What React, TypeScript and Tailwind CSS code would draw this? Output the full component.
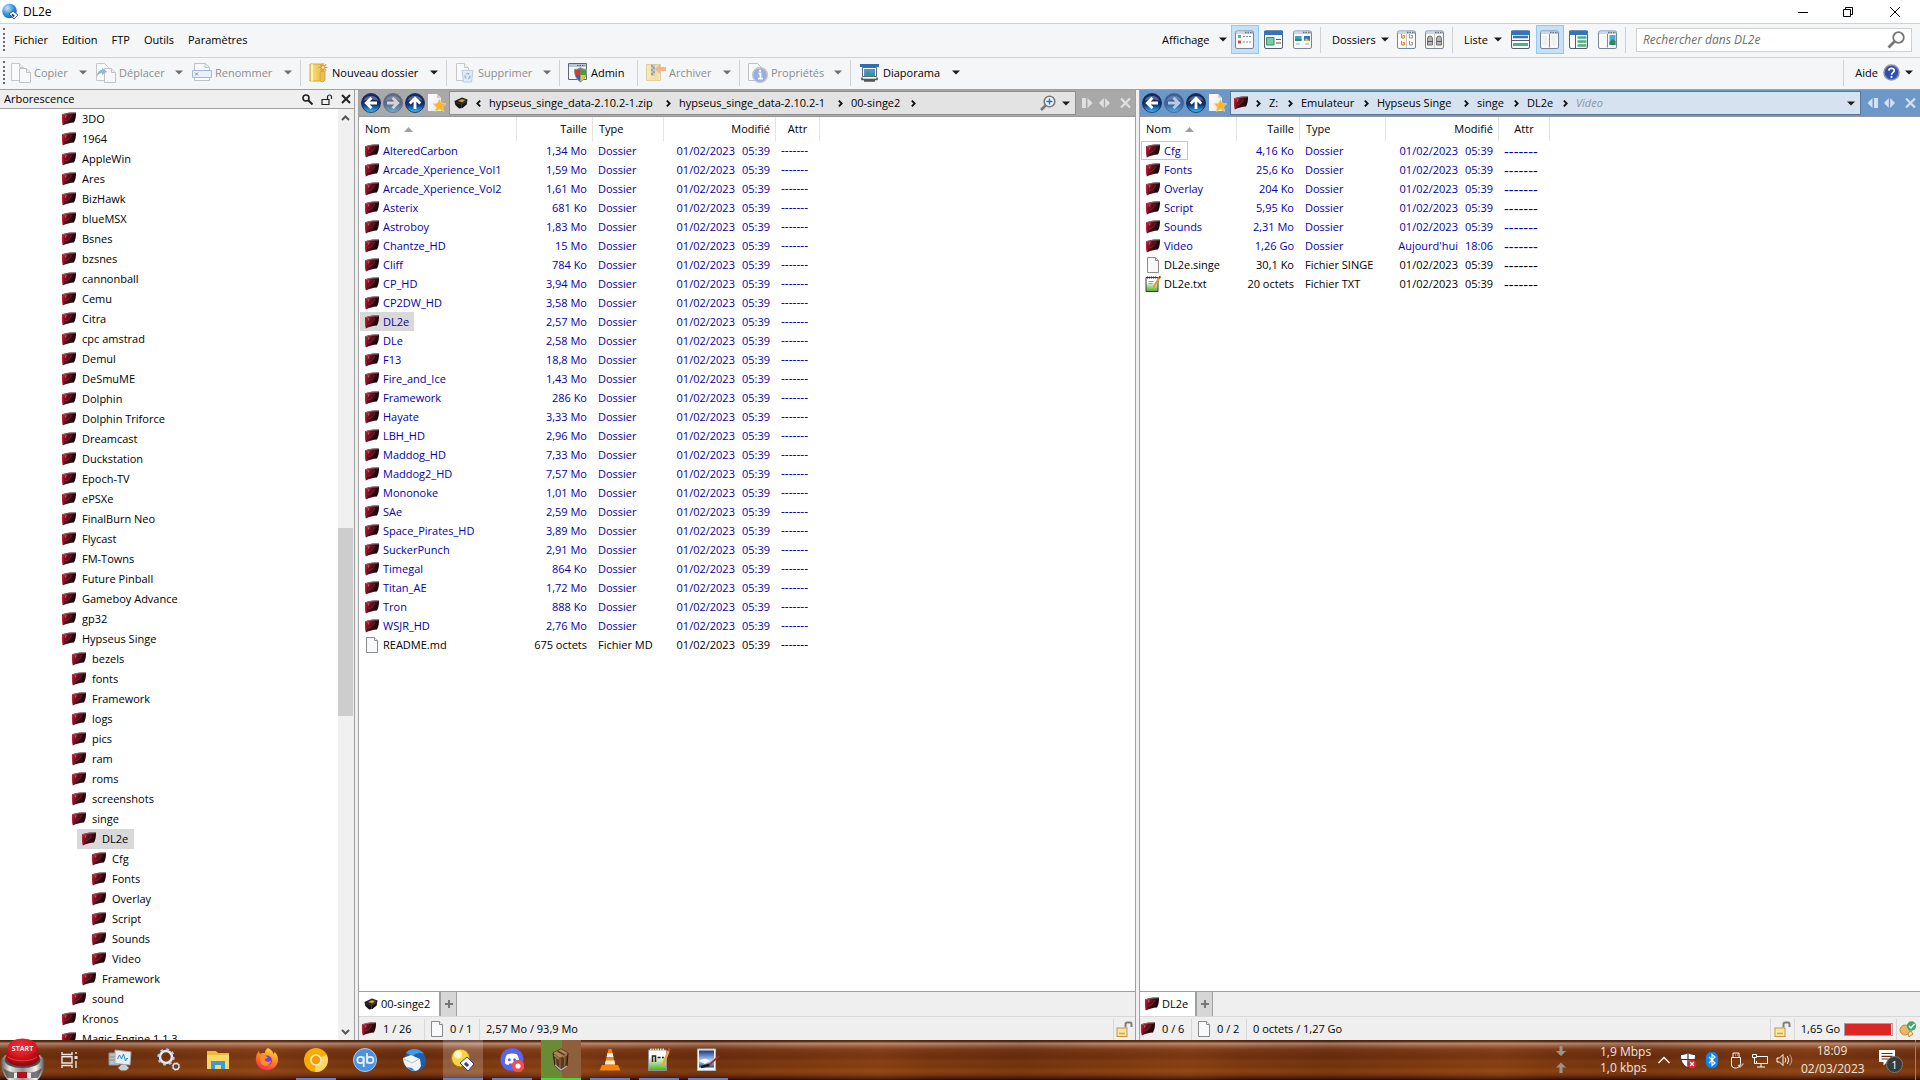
import React from "react";

type P = { c?: string };

/* ---------- small pieces ---------- */

const Caret = ({ c = "#1b1b1b" }: P) => (
  <svg width="8" height="5" viewBox="0 0 8 5" className="shrink-0" aria-hidden="true">
    <path d="M0 0.5h8L4 4.5z" fill={c} />
  </svg>
);

const Sep = () => <div className="h-[26px] w-px shrink-0 bg-[#cfd1d3]" />;

const Grip = () => <div className="h-[23px] w-0 shrink-0 border-l-2 border-dotted border-[#6b6b6b]" />;

const Defs = () => (
  <svg width="0" height="0" className="absolute" aria-hidden="true">
    <defs>
      <linearGradient id="gem" x1="0" y1="0.2" x2="1" y2="0.7">
        <stop offset="0" stopColor="#c02038" />
        <stop offset="0.22" stopColor="#8c1628" />
        <stop offset="0.5" stopColor="#4c0c16" />
        <stop offset="0.78" stopColor="#1e0508" />
        <stop offset="1" stopColor="#1a1214" />
      </linearGradient>
      <linearGradient id="orb" x1="0" y1="0" x2="0" y2="1">
        <stop offset="0" stopColor="#1a2f66" />
        <stop offset="0.35" stopColor="#13265a" />
        <stop offset="0.6" stopColor="#0f3577" />
        <stop offset="0.85" stopColor="#1f8fd8" />
        <stop offset="1" stopColor="#45c8f8" />
      </linearGradient>
      <linearGradient id="paper" x1="0" y1="0" x2="1" y2="1">
        <stop offset="0" stopColor="#ffffff" />
        <stop offset="1" stopColor="#e6e6e6" />
      </linearGradient>
      <linearGradient id="gold" x1="0" y1="0" x2="1" y2="0">
        <stop offset="0" stopColor="#f7e08a" />
        <stop offset="0.75" stopColor="#efc84e" />
        <stop offset="1" stopColor="#f6e3a0" />
      </linearGradient>
      <radialGradient id="redbtn" cx="0.45" cy="0.3" r="0.8">
        <stop offset="0" stopColor="#f2444a" />
        <stop offset="0.5" stopColor="#cf1018" />
        <stop offset="1" stopColor="#7a0409" />
      </radialGradient>
      <linearGradient id="chrome-ring" x1="0" y1="0" x2="1" y2="0">
        <stop offset="0" stopColor="#5b5b5b" />
        <stop offset="0.2" stopColor="#e3e3e3" />
        <stop offset="0.5" stopColor="#8d8d8d" />
        <stop offset="0.8" stopColor="#f2f2f2" />
        <stop offset="1" stopColor="#4c4c4c" />
      </linearGradient>
      <linearGradient id="fire" x1="0.8" y1="0" x2="0.3" y2="1">
        <stop offset="0" stopColor="#ffe14a" />
        <stop offset="0.45" stopColor="#ff8a1e" />
        <stop offset="1" stopColor="#f2275c" />
      </linearGradient>
      <linearGradient id="green" x1="0" y1="0" x2="0" y2="1">
        <stop offset="0.3" stopColor="#ffffff" />
        <stop offset="1" stopColor="#4cae1e" />
      </linearGradient>
      <linearGradient id="sky" x1="0" y1="0" x2="0" y2="1">
        <stop offset="0" stopColor="#12398c" />
        <stop offset="0.6" stopColor="#b9d6f2" />
        <stop offset="1" stopColor="#1d4f9c" />
      </linearGradient>
      <radialGradient id="ball" cx="0.35" cy="0.3" r="0.8">
        <stop offset="0" stopColor="#c6e6ff" />
        <stop offset="0.5" stopColor="#3f97e6" />
        <stop offset="1" stopColor="#1455a8" />
      </radialGradient>
    </defs>
  </svg>
);

const Gem = () => (
  <svg width="16" height="16" viewBox="0 0 16 16" className="shrink-0" aria-hidden="true">
    <path d="M1 3.2C5 1.6 10 1.2 15 1.6c.1 4-.4 7-2 10-4 .2-7.500 1.200-11.200 3C1 11 .8 7 1 3.200z" fill="url(#gem)" />
    <path d="M2 3.700C5 2.400 10 1.900 14.500 2" stroke="#8d8084" strokeWidth="0.9" fill="none" opacity="0.8" />
    <path d="M1.600 5c-.1 3 .1 5 .6 7.500" stroke="#c82038" strokeWidth="1" fill="none" opacity="0.8" />
    <path d="M4 10c3-.5 5.500-2.500 6.500-6" stroke="#7a2c38" strokeWidth="0.8" fill="none" />
    <path d="M3.500 4.800l2-.8-.8 3z" fill="#e08a96" opacity="0.6" />
  </svg>
);

const FileIcon = () => (
  <svg width="16" height="16" viewBox="0 0 16 16" className="shrink-0" aria-hidden="true">
    <path d="M2.500.5h8l3 3v12h-11z" fill="#f7f9fa" stroke="#8b8b8b" />
    <path d="M10.500.5v3h3" fill="#fff" stroke="#8b8b8b" />
  </svg>
);

const NoteIcon = () => (
  <svg width="16" height="16" viewBox="0 0 16 16" className="shrink-0" aria-hidden="true">
    <path d="M1 1.500h12v14H1z" fill="url(#green)" stroke="#3a3a3a" />
    <path d="M2 1.500h10" stroke="#333" strokeWidth="2" strokeDasharray="1 1" />
    <path d="M3.500 5.500h5M3.500 7.500h4" stroke="#9a9a9a" />
    <path d="M14.500 1.500L8.500 11" stroke="#e39a26" strokeWidth="2" />
    <path d="M15.300.3l-1.200 2" stroke="#c02020" strokeWidth="2" />
  </svg>
);

const Crate = () => (
  <svg width="16" height="16" viewBox="0 0 16 16" className="shrink-0" aria-hidden="true">
    <path d="M1.500 6L9 2.500l5.500 2-.8 5L9.500 13 6 13.500 2.300 10z" fill="#161616" />
    <path d="M4 6l5-2.500 4.500 1.500-4 2.700z" fill="#6a5420" />
    <path d="M5.500 6l3.500-1.500 2.500 1-2.500 1.500z" fill="#d9ad38" />
    <path d="M8.500 8.500V13M2.500 7.300l6 1.900 5-2.700" stroke="#3d3d3d" fill="none" />
  </svg>
);

const Orb = ({ dir, faded }: { dir: "left" | "right" | "up"; faded?: boolean }) => (
  <svg width="20" height="20" viewBox="0 0 20 20" opacity={faded ? 0.5 : 1} className="shrink-0" aria-hidden="true">
    <circle cx="10" cy="10" r="9.500" fill="url(#orb)" stroke="#10244f" strokeWidth="0.8" />
    <path d="M2.500 8a7.800 7 0 0 1 15 0c-4-2-11-2-15 0z" fill="#9fb4d6" opacity="0.45" />
    <g transform={dir === "left" ? undefined : dir === "right" ? "rotate(180 10 10)" : "rotate(90 10 10)"}>
      <path d="M16 10H6M10.500 4.700L5.200 10l5.300 5.300" stroke="#fff" strokeWidth="2.800" fill="none" />
    </g>
  </svg>
);

const StarPage = () => (
  <svg width="20" height="20" viewBox="0 0 20 20" className="shrink-0" aria-hidden="true">
    <path d="M1 1h9l4 4v13H1z" fill="url(#paper)" />
    <path d="M10 1v4h4z" fill="#cfcfcf" />
    <path d="M12.500 6l2 4.200 4.500.5-3.300 3.100.9 4.700-4.100-2.300L8.300 18.500l.9-4.600L6 10.700l4.500-.5z" fill="#f8b62d" stroke="#fbdc8a" strokeWidth="0.6" />
  </svg>
);

/* ---------- toolbar icons ---------- */

const Svg20 = ({ children, faded }: { children: React.ReactNode; faded?: boolean }) => (
  <svg width="20" height="20" viewBox="0 0 20 20" opacity={faded ? 0.5 : 1} className="shrink-0" aria-hidden="true">
    {children}
  </svg>
);

const Page = ({ x = 0, y = 0 }: { x?: number; y?: number }) => (
  <g transform={`translate(${x} ${y})`}>
    <path d="M.5.5h7l4 4v10H.5z" fill="#fbfbfb" stroke="#8e8e8e" />
    <path d="M7.500.5v4h4" fill="#e6e6e6" stroke="#8e8e8e" />
  </g>
);

const CopyIcon = () => (
  <Svg20 faded>
    <path d="M.5.5h8l4 4v13H.5z" fill="#fff" stroke="#9a9a9a" />
    <path d="M8.500.5v4h4" fill="#e6e6e6" stroke="#9a9a9a" />
    <Page x={8} y={5} />
  </Svg20>
);
const MoveIcon = () => (
  <Svg20 faded>
    <path d="M.5.5h8l4 4v13H.5z" fill="#fff" stroke="#9a9a9a" />
    <Page x={8} y={5} />
    <path d="M1 14c0-5 2-7 5-7V5l5 3.500L6 12v-2c-2 0-3.500 1-5 4z" fill="#3277c8" />
  </Svg20>
);
const RenameIcon = () => (
  <Svg20 faded>
    <path d="M2.500.5h11l4 4v13h-15z" fill="#fff" stroke="#8e8e8e" />
    <path d="M13 .5v4h4" fill="#eee" stroke="#8e8e8e" />
    <path d="M.5 7.500h19v7H.5z" fill="#e2edfb" stroke="#4e79c2" />
    <path d="M3 9.500l3 3M6 9.500l-3 3" stroke="#222" />
  </Svg20>
);
const NewFolderIcon = () => (
  <Svg20>
    <path d="M1 1h12v17H1z" fill="url(#gold)" stroke="#d4a93c" />
    <path d="M3 1v17" stroke="#fff6cf" strokeWidth="1.500" />
    <path d="M11 18V9l2-1h3v9l-2 2z" fill="#e8c053" stroke="#cfa03a" strokeWidth="0.8" />
    <path d="M14 0v9M9.500 4.500h9M10.800 1.300l6.400 6.400M17.200 1.300l-6.400 6.400" stroke="#e8912c" strokeWidth="1.200" />
    <circle cx="14" cy="4.500" r="2" fill="#ffe9a6" stroke="#e8912c" />
  </Svg20>
);
const TrashIcon = () => (
  <Svg20 faded>
    <path d="M1.500.5h8l4 4v13h-12z" fill="#fff" stroke="#9a9a9a" />
    <path d="M9.500.5v4h4" fill="#eee" stroke="#9a9a9a" />
    <path d="M7 7.500h11l-1.500 11.500h-8z" fill="#cfe1f5" stroke="#8aa4c4" />
    <circle cx="12.500" cy="13" r="2.500" fill="none" stroke="#3d7fd0" strokeWidth="1.500" strokeDasharray="3.500 1.500" />
  </Svg20>
);
const AdminIcon = () => (
  <Svg20>
    <path d="M.5.5h18v16H.5z" fill="#f4f6f8" stroke="#5c6875" />
    <path d="M1 1h17v3H1z" fill="#b9c6d4" />
    <path d="M9 2.500h8" stroke="#4d5a68" strokeDasharray="1.500 1" />
    <path d="M6 6c3 0 5-.8 6.500-2C14 5.200 16 6 19 6c.2 6-1.500 10-6.500 13.500C7.500 16 5.800 12 6 6z" fill="#8f979f" />
    <path d="M12.500 5.500V12H7.500C7 10 7 8.500 7 7c2.500 0 4-.6 5.500-1.500z" fill="#d8372c" />
    <path d="M12.500 5.500V12h5c.5-2 .5-3.500.5-5-2.500 0-4-.6-5.500-1.500z" fill="#3f9f3c" />
    <path d="M12.500 12v6.300C9.500 16.500 8.200 14.500 7.500 12z" fill="#2c63c8" />
    <path d="M12.500 12v6.300c3-1.800 4.300-3.800 5-6.300z" fill="#f4c32a" />
  </Svg20>
);
const ArchiveIcon = () => (
  <Svg20 faded>
    <path d="M.5 1.500h14v16H.5z" fill="url(#gold)" stroke="#cda845" />
    <path d="M5 1h4v12H5z" fill="#9a9a9a" />
    <path d="M5 3h2M7 5h2M5 7h2M7 9h2M5 11h2" stroke="#333" strokeWidth="1.500" />
    <path d="M9 6l5-5v3h6v4h-6v3z" fill="#ee7538" />
  </Svg20>
);
const PropsIcon = () => (
  <Svg20 faded>
    <path d="M.5.5h9l4 4v13H.5z" fill="#fff" stroke="#8e8e8e" />
    <circle cx="12" cy="12" r="7.300" fill="#3f66cc" stroke="#8c95a6" strokeWidth="1.400" />
    <path d="M10.500 10.500h2v5M10 15.700h5" stroke="#fff" strokeWidth="1.800" fill="none" />
    <circle cx="12" cy="7.700" r="1.300" fill="#fff" />
  </Svg20>
);
const SlideIcon = () => (
  <Svg20>
    <path d="M0 1h19v3H0z" fill="#2f6db0" />
    <path d="M2.500 4.500h14v9h-14z" fill="#eef4fa" stroke="#5f6b76" />
    <path d="M4 6h11v7H4z" fill="#4f93d6" />
    <path d="M4 13l4-5 3 3 2-2 2 2v2z" fill="#2e9e80" />
    <path d="M2 14.500v2h15v-2M4 18h11" stroke="#555" strokeWidth="1.600" fill="none" />
  </Svg20>
);

type WinKind = "details" | "card" | "thumbs" | "fold" | "lock" | "rows" | "dual" | "tree" | "preview";
const WinIcon = ({ kind }: { kind: WinKind }) => {
  const flat = kind === "card" || kind === "rows" || kind === "tree";
  return (
    <svg width="20" height="20" viewBox="0 0 20 20" className="shrink-0" aria-hidden="true">
      <rect x="0.500" y="1" width="18" height="17.500" rx="1.500" fill="#fafafa" stroke={flat ? "#555d66" : "#76849a"} />
      {flat ? <path d="M0 1.500Q0 .5 1 .5h17q1 0 1 1V5H0z" fill="#3474b8" /> : (
        <>
          <path d="M1 1.500h17V4H1z" fill="#cdd8e4" />
          <path d="M10 2.500h8" stroke="#5f6d7c" strokeWidth="1.500" strokeDasharray="1.500 1" />
        </>
      )}
      {kind === "details" && (
        <>
          <path d="M3 5h3v3H3z" fill="#58b883" />
          <path d="M3 10.500h3v3H3z" fill="#e04c4c" />
          <path d="M8 6.500h9M8 12h9" stroke="#8e8e8e" strokeWidth="1.200" strokeDasharray="2 1" />
        </>
      )}
      {kind === "card" && (
        <>
          <path d="M2.500 7.500h7.500v7.500H2.500z" fill="#7cc9a8" stroke="#3b8e6c" />
          <path d="M12 9.500h5M12 13h5" stroke="#555" />
        </>
      )}
      {kind === "thumbs" && (
        <>
          <path d="M2 6h6.500v5H2z" fill="#3da0c8" />
          <path d="M2 10h6.500" stroke="#2e8e55" strokeWidth="2" />
          <path d="M11 6h6v5h-6z" fill="#2c72d6" />
          <path d="M13 8l4 3h-6z" fill="#e0b92c" />
          <path d="M3 14h4M12 14h4" stroke="#aaa" />
        </>
      )}
      {kind === "fold" && (
        <>
          <path d="M4.500 4v4h3V5.500H6M4.500 11v4h3v-2.500H6" fill="#f6dd8c" stroke="#c98f22" />
          <path d="M12.500 4v4h3V5.500H14M12.500 11v4h3v-2.500H14" fill="#eee" stroke="#999" />
          <path d="M9.500 4v14" stroke="#c6c6c6" />
        </>
      )}
      {kind === "lock" && (
        <>
          <path d="M2.500 15V9a2.500 3 0 0 1 5 0v6zM11.500 15V9a2.500 3 0 0 1 5 0v6z" fill="#b5b5b5" stroke="#6e6e6e" />
          <path d="M3 11.500h4.500M12 11.500h4.500" stroke="#555" />
          <path d="M9.500 4v14" stroke="#c6c6c6" />
        </>
      )}
      {kind === "rows" && (
        <>
          <path d="M2 7h15" stroke="#3474b8" strokeWidth="2.500" />
          <path d="M0 10.500h19" stroke="#555d66" />
          <path d="M2 14.500h15" stroke="#4fae86" strokeWidth="3" />
        </>
      )}
      {kind === "dual" && (
        <>
          <path d="M9.500 4v13.500" stroke="#7d8b9c" />
          <path d="M2.500 5.500h5v10h-5zM11.500 5.500h5v10h-5z" fill="#f0f0f0" />
        </>
      )}
      {kind === "tree" && (
        <>
          <path d="M6.500 5v13" stroke="#555d66" />
          <path d="M8.500 7.500h9M8.500 11.500h9M8.500 15.500h9" stroke="#4fae86" strokeWidth="2.500" />
        </>
      )}
      {kind === "preview" && (
        <>
          <path d="M9.500 4v13.500" stroke="#7d8b9c" />
          <path d="M11.500 5h6v10h-6z" fill="#4fa8e0" />
          <path d="M11.500 15v-3l3-3 3 2v4z" fill="#2c8a62" />
        </>
      )}
    </svg>
  );
};

/* ---------- tool bars ---------- */

const ViewBtn = ({ kind, on, label }: { kind: WinKind; on?: boolean; label: string }) => (
  <button
    aria-label={label}
    className={
      on
        ? "flex h-[29px] w-7 items-center justify-center border border-[#90c8f6] bg-[#c4e1f9]"
        : "flex h-[29px] w-7 items-center justify-center border border-transparent"
    }
  >
    <WinIcon kind={kind} />
  </button>
);

const Tool = ({ icon, label, w, off, caret = true }: { icon: React.ReactNode; label: string; w: string; off?: boolean; caret?: boolean }) => (
  <button className={`flex h-7 shrink-0 items-center gap-[3px] pr-px ${w} ${off ? "text-[#8b8d8f]" : "text-black"}`}>
    {icon}
    <span className="whitespace-nowrap">{label}</span>
    {caret && (
      <span className="ml-auto">
        <Caret c={off ? "#6d6d6d" : "#1b1b1b"} />
      </span>
    )}
  </button>
);

const TitleBar = () => (
  <header className="flex h-[23px] shrink-0 items-center bg-white pl-[2px] text-xs">
    <svg width="17" height="17" viewBox="0 0 17 17" aria-hidden="true">
      <circle cx="7.500" cy="8" r="7.300" fill="url(#ball)" />
      <path d="M7 11l4-3 5 4-4 4z" fill="#eef3fb" stroke="#465a8c" />
      <path d="M10 11.500l2 2" stroke="#2c3f78" strokeWidth="2" />
    </svg>
    <h1 className="ml-1">DL2e</h1>
    <div className="ml-auto flex items-center">
      <button aria-label="Réduire" className="flex h-5 w-[46px] items-center justify-center">
        <svg width="10" height="10" viewBox="0 0 10 10"><path d="M0 5.500h10" stroke="#000" /></svg>
      </button>
      <button aria-label="Restaurer" className="flex h-5 w-[44px] items-center justify-center">
        <svg width="10" height="10" viewBox="0 0 10 10" fill="none" stroke="#000">
          <path d="M.5 2.500h7v7h-7zM2.500 2.500v-2h7v7h-2" />
        </svg>
      </button>
      <button aria-label="Fermer" className="flex h-5 w-[50px] items-center justify-center">
        <svg width="10" height="10" viewBox="0 0 10 10" stroke="#000"><path d="M0 0l10 10M10 0L0 10" /></svg>
      </button>
    </div>
  </header>
);

const MenuBar = () => (
  <div className="flex h-[35px] shrink-0 items-center border-y border-[#cfd1d3] bg-[#f4f6f8] pb-[2px]">
    <div className="flex items-center pl-[3px]">
      <Grip />
      <nav className="ml-[9px] flex gap-[14px]">
        {["Fichier", "Edition", "FTP", "Outils", "Paramètres"].map((m) => (
          <button key={m}>{m}</button>
        ))}
      </nav>
    </div>
    <div className="ml-auto flex items-center pr-[8px]">
      <button className="flex w-[69px] items-center justify-between pr-1">Affichage <Caret /></button>
      <ViewBtn kind="details" on label="Détails" />
      <span className="w-px" />
      <ViewBtn kind="card" label="Tuiles" />
      <span className="w-px" />
      <ViewBtn kind="thumbs" label="Vignettes" />
      <span className="w-[3px]" />
      <Sep />
      <button className="ml-[11px] flex w-[61px] items-center justify-between pr-1">Dossiers <Caret /></button>
      <ViewBtn kind="fold" label="Format des dossiers" />
      <ViewBtn kind="lock" label="Verrouiller le format" />
      <span className="w-[3px]" />
      <Sep />
      <button className="ml-[11px] flex w-[43px] items-center justify-between pr-[5px]">Liste <Caret /></button>
      <ViewBtn kind="rows" label="Vue horizontale" />
      <span className="w-px" />
      <ViewBtn kind="dual" on label="Vue double" />
      <span className="w-px" />
      <ViewBtn kind="tree" label="Arborescence" />
      <span className="w-px" />
      <ViewBtn kind="preview" label="Aperçu" />
      <span className="w-[3px]" />
      <Sep />
      <label className="ml-[10px] flex h-6 w-[276px] items-center border border-[#cfd1d3] bg-white px-[6px]">
        <input
          aria-label="Rechercher dans DL2e"
          placeholder="Rechercher dans DL2e"
          className="min-w-0 flex-1 bg-transparent text-xs italic outline-none placeholder:text-[#6e6e6e]"
        />
        <svg width="18" height="18" viewBox="0 0 18 18" fill="none" stroke="#777" aria-hidden="true">
          <circle cx="11.500" cy="6.500" r="5.300" strokeWidth="1.800" />
          <path d="M7.500 10.500l-6 6" strokeWidth="2.800" />
        </svg>
      </label>
    </div>
  </div>
);

const ToolBar = () => (
  <div className="flex h-[31px] shrink-0 items-center bg-[#f4f6f8] pb-[2px] pl-[3px] pr-[7px]">
    <Grip />
    <span className="w-[6px]" />
    <Tool icon={<CopyIcon />} label="Copier" w="w-[77px]" off />
    <span className="w-2" />
    <Tool icon={<MoveIcon />} label="Déplacer" w="w-[88px]" off />
    <span className="w-2" />
    <Tool icon={<RenameIcon />} label="Renommer" w="w-[101px]" off />
    <span className="w-[7px]" />
    <Sep />
    <span className="w-2" />
    <Tool icon={<NewFolderIcon />} label="Nouveau dossier" w="w-[130px]" />
    <span className="w-[7px]" />
    <Sep />
    <span className="w-2" />
    <Tool icon={<TrashIcon />} label="Supprimer" w="w-[97px]" off />
    <span className="w-[7px]" />
    <Sep />
    <span className="w-2" />
    <Tool icon={<AdminIcon />} label="Admin" w="w-[62px]" caret={false} />
    <span className="w-[7px]" />
    <Sep />
    <span className="w-2" />
    <Tool icon={<ArchiveIcon />} label="Archiver" w="w-[86px]" off />
    <span className="w-[7px]" />
    <Sep />
    <span className="w-2" />
    <Tool icon={<PropsIcon />} label="Propriétés" w="w-[95px]" off />
    <span className="w-[7px]" />
    <Sep />
    <span className="w-[9px]" />
    <Tool icon={<SlideIcon />} label="Diaporama" w="w-[101px]" />
    <div className="ml-auto flex items-center">
      <Sep />
      <button className="ml-[11px] flex items-center gap-[5px]">
        Aide
        <svg width="17" height="17" viewBox="0 0 17 17" aria-hidden="true">
          <circle cx="8.500" cy="8.500" r="7.500" fill="#2c4fb4" stroke="#8b93a0" strokeWidth="1.600" />
          <path d="M5.800 6.600c.2-3 5.600-3 5.500 0-.1 1.800-2.600 1.700-2.700 4" stroke="#fff" strokeWidth="1.700" fill="none" />
          <circle cx="8.500" cy="12.900" r="1.100" fill="#fff" />
        </svg>
        <Caret />
      </button>
    </div>
  </div>
);

/* ---------- tree ---------- */

const tree: [number, string][] = [
  ...["3DO", "1964", "AppleWin", "Ares", "BizHawk", "blueMSX", "Bsnes", "bzsnes", "cannonball", "Cemu", "Citra", "cpc amstrad", "Demul", "DeSmuME", "Dolphin", "Dolphin Triforce", "Dreamcast", "Duckstation", "Epoch-TV", "ePSXe", "FinalBurn Neo", "Flycast", "FM-Towns", "Future Pinball", "Gameboy Advance", "gp32", "Hypseus Singe"].map((n) => [0, n] as [number, string]),
  ...["bezels", "fonts", "Framework", "logs", "pics", "ram", "roms", "screenshots", "singe"].map((n) => [1, n] as [number, string]),
  [2, "DL2e"],
  ...["Cfg", "Fonts", "Overlay", "Script", "Sounds", "Video"].map((n) => [3, n] as [number, string]),
  [2, "Framework"],
  [1, "sound"],
  [0, "Kronos"],
  [0, "Magic-Engine 1.1.3"],
];
const indent = ["pl-[57px]", "pl-[67px]", "pl-[77px]", "pl-[87px]"];

const Tree = () => (
  <aside className="flex w-[355px] shrink-0 flex-col border-r border-[#a0a0a0] bg-white">
    <div className="flex h-[19px] shrink-0 items-center border-b border-[#a0a0a0] bg-[#efefef] pl-1 pr-[3px]">
      <h2>Arborescence</h2>
      <div className="ml-auto flex items-center gap-2">
        <button aria-label="Rechercher">
          <svg width="11" height="11" viewBox="0 0 11 11" fill="none" stroke="#222">
            <circle cx="4" cy="4" r="3" strokeWidth="1.600" />
            <path d="M6 6l4.500 4.500" strokeWidth="2" />
          </svg>
        </button>
        <button aria-label="Déverrouiller">
          <svg width="12" height="11" viewBox="0 0 12 11" fill="none" stroke="#222">
            <path d="M1 5.500h7v5H1z" strokeWidth="1.200" />
            <path d="M6.500 5V3a2 2 0 0 1 4 0v2" strokeWidth="1.200" />
          </svg>
        </button>
        <button aria-label="Fermer">
          <svg width="10" height="10" viewBox="0 0 10 10" stroke="#222" strokeWidth="2"><path d="M1 1l8 8M9 1L1 9" /></svg>
        </button>
      </div>
    </div>
    <div className="flex min-h-0 flex-1">
      <ul className="min-w-0 flex-1 overflow-hidden">
        {tree.map(([d, n], i) => (
          <li key={i} className={`flex h-5 ${indent[d]}`}>
            <button
              className={
                i === 36
                  ? "flex h-5 items-center gap-[5px] bg-[#d9d9d9] pl-1 pr-[6px]"
                  : "flex h-5 items-center gap-[5px] pl-1 pr-[6px]"
              }
            >
              <Gem />
              {n}
            </button>
          </li>
        ))}
      </ul>
      <div className="flex w-4 shrink-0 flex-col bg-[#f0f0f0]">
        <svg width="15" height="17" viewBox="0 0 15 17" fill="none" stroke="#555" strokeWidth="2"><path d="M4 11l3.500-3.500L11 11" /></svg>
        <div className="flex flex-1 flex-col">
          <div className="grow-[402]" />
          <div className="mr-px grow-[188] bg-[#cdcdcd]" />
          <div className="grow-[307]" />
        </div>
        <svg width="15" height="17" viewBox="0 0 15 17" fill="none" stroke="#555" strokeWidth="2"><path d="M4 7l3.500 3.500L11 7" /></svg>
      </div>
    </div>
  </aside>
);

/* ---------- listers ---------- */

type Row = [string, string, string, string, string, ("gem" | "file" | "note")?];

const D = "01/02/2023";
const H = "05:39";
const dir = (n: string, s: string): Row => [n, s, "Dossier", D, H, "gem"];

const leftRows: Row[] = [
  dir("AlteredCarbon", "1,34 Mo"), dir("Arcade_Xperience_Vol1", "1,59 Mo"), dir("Arcade_Xperience_Vol2", "1,61 Mo"),
  dir("Asterix", "681 Ko"), dir("Astroboy", "1,83 Mo"), dir("Chantze_HD", "15 Mo"), dir("Cliff", "784 Ko"),
  dir("CP_HD", "3,94 Mo"), dir("CP2DW_HD", "3,58 Mo"), dir("DL2e", "2,57 Mo"), dir("DLe", "2,58 Mo"),
  dir("F13", "18,8 Mo"), dir("Fire_and_Ice", "1,43 Mo"), dir("Framework", "286 Ko"), dir("Hayate", "3,33 Mo"),
  dir("LBH_HD", "2,96 Mo"), dir("Maddog_HD", "7,33 Mo"), dir("Maddog2_HD", "7,57 Mo"), dir("Mononoke", "1,01 Mo"),
  dir("SAe", "2,59 Mo"), dir("Space_Pirates_HD", "3,89 Mo"), dir("SuckerPunch", "2,91 Mo"), dir("Timegal", "864 Ko"),
  dir("Titan_AE", "1,72 Mo"), dir("Tron", "888 Ko"), dir("WSJR_HD", "2,76 Mo"),
  ["README.md", "675 octets", "Fichier MD", D, H, "file"],
];
const rightRows: Row[] = [
  dir("Cfg", "4,16 Ko"), dir("Fonts", "25,6 Ko"), dir("Overlay", "204 Ko"), dir("Script", "5,95 Ko"),
  dir("Sounds", "2,31 Mo"), ["Video", "1,26 Go", "Dossier", "Aujourd'hui", "18:06", "gem"],
  ["DL2e.singe", "30,1 Ko", "Fichier SINGE", D, H, "file"],
  ["DL2e.txt", "20 octets", "Fichier TXT", D, H, "note"],
];

const FileTable = ({ rows, cols, mark, attr }: { rows: Row[]; cols: string[]; mark: (i: number) => string; attr: string }) => (
  <div className="min-h-0 flex-1 overflow-hidden bg-white">
    <table className="table-fixed border-separate border-spacing-0 whitespace-nowrap">
      <colgroup>{cols.map((c, i) => <col key={i} className={c} />)}</colgroup>
      <thead>
        <tr className="h-6">
          <th className="border-r border-[#e3e3e3] p-0 pl-[6px] text-left font-normal">
            <span className="flex items-center gap-[14px]">
              Nom
              <svg width="9" height="5" viewBox="0 0 9 5" aria-hidden="true"><path d="M0 5h9L4.500 0z" fill="#a0a0a0" /></svg>
            </span>
          </th>
          <th className="border-r border-[#e3e3e3] p-0 pr-[5px] text-right font-normal">Taille</th>
          <th className="border-r border-[#e3e3e3] p-0 pl-[6px] text-left font-normal">Type</th>
          <th className="border-r border-[#e3e3e3] p-0 pr-[5px] text-right font-normal">Modifié</th>
          <th className="border-r border-[#e3e3e3] p-0 text-center font-normal">Attr</th>
        </tr>
      </thead>
      <tbody>
        {rows.map(([n, s, t, d, h, k], i) => (
          <tr key={n} className={k === "gem" ? "h-[19px] text-[#0500a8]" : "h-[19px] text-black"}>
            <td className="p-0 pl-px">
              <span className={`flex h-[19px] w-fit items-center gap-[3px] border pl-[3px] ${mark(i)}`}>
                {k === "gem" ? <Gem /> : k === "file" ? <FileIcon /> : <NoteIcon />}
                {n}
              </span>
            </td>
            <td className="p-0 pr-[6px] text-right">{s}</td>
            <td className="p-0 pl-[5px]">{t}</td>
            <td className="p-0 pr-[6px]">
              <span className="flex justify-end gap-[7px]"><span>{d}</span><span>{h}</span></span>
            </td>
            <td className={`p-0 pl-[5px] leading-4 ${attr}`}>-------</td>
          </tr>
        ))}
      </tbody>
    </table>
  </div>
);

const Chevron = ({ back }: { back?: boolean }) => (
  <svg width="5" height="7" viewBox="0 0 5 7" fill="none" stroke="#111" strokeWidth="1.800" className="shrink-0" aria-hidden="true">
    {back ? <path d="M4.200.6L1.300 3.500l2.900 2.900" /> : <path d="M.8.6l2.900 2.900L.8 6.400" />}
  </svg>
);

const Crumb = ({ children, w, dim }: { children: string; w: string; dim?: boolean }) => (
  <button className={`shrink-0 whitespace-nowrap text-left ${w} ${dim ? "italic text-[#8f959c]" : ""}`}>{children}</button>
);

const NavButtons = () => (
  <div className="flex shrink-0 items-center gap-[2px] pl-[2px] pr-[2px]">
    <button aria-label="Précédent"><Orb dir="left" /></button>
    <button aria-label="Suivant"><Orb dir="right" faded /></button>
    <button aria-label="Dossier parent"><Orb dir="up" /></button>
    <button aria-label="Favoris"><StarPage /></button>
  </div>
);

const PaneButtons = ({ side, color }: { side: "l" | "r"; color: string }) => (
  <div className="flex shrink-0 items-center gap-[6px] pl-[6px] pr-1">
    <button aria-label="Agrandir">
      <svg width="11" height="10" viewBox="0 0 11 10" fill={color}>
        {side === "l" ? <path d="M0 0h4v10H0zM5.500 0l5 5-5 5z" /> : <path d="M7 0h4v10H7zM5.500 0L.5 5l5 5z" />}
      </svg>
    </button>
    <button aria-label="Inverser">
      <svg width="11" height="10" viewBox="0 0 11 10" fill={color}><path d="M4.800 0v10L0 5zM6.200 0v10L11 5z" /></svg>
    </button>
    <button aria-label="Fermer" className="ml-1">
      <svg width="11" height="10" viewBox="0 0 11 10" stroke={color} strokeWidth="2.200"><path d="M1 .5l9 9M10 .5l-9 9" /></svg>
    </button>
  </div>
);

const PadLock = () => (
  <svg width="17" height="16" viewBox="0 0 17 16" fill="none" aria-hidden="true">
    <path d="M9.500 6.500V3.500Q9.500 1.500 11 1.500h3q1.500 0 1.500 2V6" stroke="#7d7d7d" strokeWidth="2" />
    <rect x="1" y="7" width="10" height="8.500" fill="#fce6a4" stroke="#c79545" />
    <path d="M3 12.500h6" stroke="#dba838" strokeWidth="1.500" />
  </svg>
);

const BarSep = () => <div className="h-[21px] w-px shrink-0 bg-[#d8d8d8]" />;

const TabBar = ({ icon, name, w }: { icon: React.ReactNode; name: string; w: string }) => (
  <div className="flex h-[25px] shrink-0 border-t border-[#a0a0a0] bg-[#efefef]">
    <button className={`flex h-6 items-center gap-[2px] border-r-2 border-[#a0a0a0] bg-white pb-px pl-[4px] ${w}`}>
      {icon}
      {name}
    </button>
    <button aria-label="Nouvel onglet" className="flex h-6 w-[16px] items-center justify-center border-r border-[#a0a0a0] bg-[#d6d6d6]">
      <svg width="8" height="8" viewBox="0 0 8 8" stroke="#777" strokeWidth="2"><path d="M4 0v8M0 4h8" /></svg>
    </button>
  </div>
);

const LeftPane = () => (
  <section className="flex min-w-0 flex-[777_1_0px] flex-col border-x border-[#a0a0a0]">
    <div className="flex h-[27px] shrink-0 items-center border-b border-[#989898] bg-[#a9a9a9]">
      <NavButtons />
      <div className="flex h-6 min-w-0 flex-1 items-center border border-[#8c8c8c] bg-[#e3e3e3] pl-[3px] pr-[5px]">
        <Crate />
        <div className="ml-[7px] flex items-center gap-[8px]">
          <Chevron back />
          <Crumb w="w-[169px]">hypseus_singe_data-2.10.2-1.zip</Crumb>
          <Chevron />
          <Crumb w="w-[151px]">hypseus_singe_data-2.10.2-1</Crumb>
          <Chevron />
          <Crumb w="w-[52px]">00-singe2</Crumb>
          <Chevron />
        </div>
        <button aria-label="Rechercher" className="ml-auto mr-[6px]">
          <svg width="16" height="16" viewBox="0 0 16 16" fill="none">
            <circle cx="9.500" cy="6.500" r="5.300" stroke="#777" strokeWidth="1.600" fill="#f2f6fa" />
            <path d="M5.500 10.500L1 15" stroke="#777" strokeWidth="2.600" />
            <path d="M9.500 3.500v6M6.500 6.500h6" stroke="#2d6cb5" strokeWidth="1.400" />
          </svg>
        </button>
        <Caret />
      </div>
      <PaneButtons side="l" color="#e0e0e0" />
    </div>
    <FileTable
      rows={leftRows}
      cols={["w-[158px]", "w-[76px]", "w-[71px]", "w-[112px]", "w-[44px]"]}
      mark={(i) => (i === 9 ? "border-[#d9d9d9] bg-[#d9d9d9] pr-1" : "border-transparent pr-1")}
      attr="text-xs"
    />
    <TabBar icon={<Crate />} name="00-singe2" w="w-[82px]" />
    <div className="flex h-6 shrink-0 items-center border-t border-[#d8d8d8] bg-[#efefef] pl-[2px] pt-px">
      <Gem />
      <span className="ml-[6px] w-[41px]">1 / 26</span>
      <BarSep />
      <span className="ml-1"><FileIcon /></span>
      <span className="ml-[5px] w-[29px] whitespace-nowrap">0 / 1</span>
      <BarSep />
      <span className="ml-[6px]">2,57 Mo / 93,9 Mo</span>
      <span className="ml-auto" />
      <BarSep />
      <button aria-label="Verrou" className="ml-[2px] mr-[2px]"><PadLock /></button>
    </div>
  </section>
);

const RightPane = () => (
  <section className="flex min-w-0 flex-[781_1_0px] flex-col border-l border-[#a0a0a0]">
    <div className="flex h-[27px] shrink-0 items-center border-b border-[#989898] bg-[#6b97c9]">
      <NavButtons />
      <div className="flex h-6 min-w-0 flex-1 items-center border border-[#56779e] bg-[#d6e2f0] pl-[2px] pr-[5px]">
        <Gem />
        <div className="ml-[7px] flex items-center gap-[8px]">
          <Chevron />
          <Crumb w="w-[11px]">Z:</Crumb>
          <Chevron />
          <Crumb w="w-[55px]">Emulateur</Crumb>
          <Chevron />
          <Crumb w="w-[79px]">Hypseus Singe</Crumb>
          <Chevron />
          <Crumb w="w-[29px]">singe</Crumb>
          <Chevron />
          <Crumb w="w-[28px]">DL2e</Crumb>
          <Chevron />
          <Crumb w="w-[31px]" dim>Video</Crumb>
        </div>
        <span className="ml-auto" />
        <Caret />
      </div>
      <PaneButtons side="r" color="#d3e1f1" />
    </div>
    <FileTable
      rows={rightRows}
      cols={["w-[97px]", "w-[63px]", "w-[86px]", "w-[113px]", "w-[51px]"]}
      mark={(i) => (i === 0 ? "border-[#99d1ff] pr-[6px]" : "border-transparent pr-[6px]")}
      attr="text-[15px]"
    />
    <TabBar icon={<Gem />} name="DL2e" w="w-[57px]" />
    <div className="flex h-6 shrink-0 items-center border-t border-[#d8d8d8] bg-[#efefef] pt-px">
      <Gem />
      <span className="ml-[6px] w-[29px] whitespace-nowrap">0 / 6</span>
      <BarSep />
      <span className="ml-1"><FileIcon /></span>
      <span className="ml-[5px] w-[29px] whitespace-nowrap">0 / 2</span>
      <BarSep />
      <span className="ml-[6px]">0 octets / 1,27 Go</span>
      <span className="ml-auto" />
      <BarSep />
      <button aria-label="Verrou" className="mx-[3px]"><PadLock /></button>
      <BarSep />
      <span className="ml-[6px]">1,65 Go</span>
      <div className="ml-1 mr-[3px] h-[13px] w-[49px] border border-[#a0a0a0] bg-white pr-px">
        <div className="h-full bg-[#dc2626]" />
      </div>
      <BarSep />
      <svg width="18" height="17" viewBox="0 0 18 17" className="ml-[2px] mr-[3px]" aria-hidden="true">
        <circle cx="6" cy="9" r="5" fill="#e8b765" stroke="#c08a38" />
        <path d="M9 12l3-2 2 3-4 3z" fill="#f8e2a0" stroke="#c08a38" />
        <circle cx="12.500" cy="5" r="4.700" fill="#3fa86f" />
        <path d="M10 5l2 2 3.500-4" stroke="#fff" strokeWidth="1.500" fill="none" />
      </svg>
    </div>
  </section>
);

/* ---------- task bar ---------- */

const Svg24 = ({ children }: { children: React.ReactNode }) => (
  <svg width="24" height="24" viewBox="0 0 24 24" aria-hidden="true">{children}</svg>
);

const gear = (cx: number, cy: number, r: number) => (
  <g>
    <circle cx={cx} cy={cy} r={r} fill="none" stroke="#dbe9f4" strokeWidth={r * 0.42} />
    <circle cx={cx} cy={cy} r={r * 1.3} fill="none" stroke="#a9cbe4" strokeWidth={r * 0.3} strokeDasharray={`${r * 0.48} ${r * 0.54}`} />
  </g>
);

const apps: { name: string; line?: string; bg?: string; icon: React.ReactNode }[] = [
  { name: "Moniteur", icon: <Svg24>
    <path d="M1 5h10v12H1z" fill="#b9c0c5" stroke="#8b9197" /><path d="M2 9h5M2 12h5" stroke="#868d92" /><path d="M7 2l16 2-1 13-15-1.500z" fill="#e9eef2" stroke="#a4abb1" />
    <path d="M9 4.500l12 1.500-.8 9L9 13.500z" fill="#dff1fb" /><path d="M9.500 11l2-4 2 4 2-5 2 7 1.500-3 1 1" stroke="#2f86b8" fill="none" />
    <path d="M13 17h5l3 3-3 2.500h-5L10 20z" fill="#c9ced3" /></Svg24> },
  { name: "Services", icon: <Svg24>{gear(9, 9, 6)}{gear(19, 18.5, 3)}</Svg24> },
  { name: "Explorateur", icon: <Svg24><path d="M1 3h9l2 2h11v16H1z" fill="#f0b838" /><path d="M1 7h22v14H1z" fill="#fbd867" /><path d="M5 21v-8h14v8h-4v-4H9v4z" fill="#3a9bdc" /></Svg24> },
  { name: "Firefox", icon: <Svg24>
    <path d="M13 0c4 2 5 4 5.500 6 1-.5 1-1.500 1-2.500 3 3 4 7 3.300 10.500A11.200 11.200 0 0 1 .8 12C.6 8 2 5 4 3c0 1 .3 2 1 3 2-1.500 3.500-1 5-1-.2-2 1-4 3-5z" fill="url(#fire)" />
    <circle cx="12" cy="12.500" r="5" fill="#7a3fd8" /><path d="M6 8c3-1 6 0 7 2-2 0-3 .8-3 2 1 2.500 4 2 6 .5-.5 4-4 6-7 5-4-1.500-5-6-3-9.500z" fill="#ff8f24" /></Svg24> },
  { name: "Chrome", line: "bg-[#5f82d8]", icon: <Svg24><circle cx="12" cy="12" r="12" fill="#f7ab07" /><path d="M12 12L22.500 6.500A12 12 0 0 1 11 24z" fill="#fdd663" /><circle cx="12" cy="12" r="5.800" fill="#fff3d0" /><circle cx="12" cy="12" r="4.300" fill="#f29d05" /></Svg24> },
  { name: "qBittorrent", icon: <Svg24><circle cx="12" cy="12" r="11.500" fill="#4b93dc" stroke="#a9cdf2" />
    <g fill="none" stroke="#e4f1fd" strokeWidth="1.800"><circle cx="7.500" cy="12" r="3.200" /><path d="M10.700 8.500V19M14 5v10.500" /><circle cx="17.200" cy="12" r="3.200" /></g></Svg24> },
  { name: "Thunderbird", icon: <Svg24><circle cx="13" cy="12.500" r="10.800" fill="#1a5fb0" /><path d="M4 5C8-1 18 0 22 6c-4-2-8-1-11 2z" fill="#3f9ae6" /><path d="M1 10l8-3 9 4 1 7c-1 3-4 5-7 5C6 22 1 17 1 10z" fill="#f3f4f6" /><path d="M2 11l8 4 7-4" stroke="#b6bcc6" fill="none" /><path d="M5 19l3 3 5 1-3-3z" fill="#2f86d8" /></Svg24> },
  { name: "Directory Opus", line: "bg-[#5f82d8]", bg: "bg-white/20", icon: <Svg24><circle cx="9.500" cy="10" r="9" fill="#f8d43a" stroke="#a27d10" /><circle cx="7" cy="6.500" r="4" fill="#fff7c2" /><path d="M9 15l7-6 7 7-6 7z" fill="#f4f5fb" stroke="#39406e" /><path d="M14 15l3 3" stroke="#2c3f98" strokeWidth="3" /></Svg24> },
  { name: "Discord", line: "bg-[#5f82d8]", icon: <Svg24><circle cx="12" cy="11.500" r="11.500" fill="#5865f2" />
    <path d="M7 6.500c3-1.300 7-1.300 10 0 2 3 2.500 6 2 9-1.500 1-2.500 1.300-3.500 1.500l-1-1.800c-1.500.4-3.500.4-5 0L8.500 17c-1-.2-2.500-.5-3.500-1.500-.3-3 .2-6 2-9z" fill="#fff" />
    <circle cx="9.300" cy="11.700" r="1.500" fill="#5865f2" /><circle cx="14.700" cy="11.700" r="1.500" fill="#5865f2" /><circle cx="18" cy="18" r="6.300" fill="#f04d4f" /><circle cx="18" cy="18" r="2.600" fill="#fff" /></Svg24> },
  { name: "Archive", line: "bg-[#3fe02c]", bg: "bg-[linear-gradient(90deg,#6b8a35_0_21px,#8f5f3c_21px)]", icon: <Svg24><path d="M4 5l8-4 7 4-1 13-6 5-6-5z" fill="#5a3a22" stroke="#2a1a0e" /><path d="M4 5l8-4 7 4-8 5z" fill="#b08455" /><path d="M5 7l5 4M14 9l4-3" stroke="#a0764a" strokeWidth="2" /><path d="M11 11v10M6.500 10l.5 8M16 9l-.5 9" stroke="#8a6238" strokeWidth="1.500" /><path d="M6 17l6 5 6-4" stroke="#aeb4b8" strokeWidth="1.500" fill="none" /><path d="M8.500 3l7 4" stroke="#5b3a18" strokeWidth="1.500" /></Svg24> },
  { name: "VLC", line: "bg-[#5f82d8]", icon: <Svg24><path d="M4 17h16l2.500 5.500h-21z" fill="#f58410" /><path d="M10.500 1h3l4 17c-3 2-8 2-11 0z" fill="#f58410" /><path d="M9.500 5h5l1 4h-7zM7.800 12.500h8.500l.9 3.700H6.900z" fill="#f1f1f1" /></Svg24> },
  { name: "Notepad++", line: "bg-[#5f82d8]", icon: <Svg24><path d="M1.500 2h18v20.500h-18z" fill="url(#green)" stroke="#8f8f8f" /><path d="M3 1.500h15" stroke="#ddd" strokeWidth="2" strokeDasharray="1.500 1" /><path d="M5.500 14V8h3v6M10.500 9.500h3M15 9.500h2" stroke="#222" strokeWidth="1.500" fill="none" /><path d="M21.500 3l-6 15" stroke="#e9a93a" strokeWidth="2.500" /><path d="M22.500.5l-1 2.500" stroke="#d04040" strokeWidth="2.500" /></Svg24> },
  { name: "Image", line: "bg-[#5f82d8]", icon: <Svg24><path d="M1.500 1h18v21.500h-18z" fill="#f1f4f8" stroke="#b3b9c0" /><path d="M3 2.500h15v17H3z" fill="url(#sky)" /><path d="M3 13c4-3 8-3 11 0l-5 3z" fill="#f4fafe" /><path d="M23 8L12 18" stroke="#b02828" strokeWidth="1.800" /><path d="M13 17l-8 2" stroke="#1a1a1a" strokeWidth="2.500" /></Svg24> },
];

const Taskbar = () => (
  <footer className="relative flex h-10 shrink-0 items-stretch bg-[linear-gradient(180deg,#4a200a_0,#6a3416_2px,#b98c74_3px,#9a6344_6px,#7d3e1b_9px,#74330f_13px,#6e2f0e_17px,#7f3b13_22px,#78370f_26px,#8a4314_31px,#783510_35px,#4c1e09_38px,#260d03_40px)] text-xs text-[#efe6e0]">
    <div className="pointer-events-none absolute inset-0 bg-[repeating-linear-gradient(91deg,transparent_0,rgba(40,8,0,0.12)_90px,transparent_170px,rgba(255,150,70,0.08)_260px,transparent_310px)]" />
    <button aria-label="Démarrer" className="relative w-[45px]">
      <svg width="45" height="42" viewBox="0 0 45 42" className="absolute bottom-0 left-0" aria-hidden="true">
        <path d="M1 24C1 10 44 10 44.500 24c0 8-3 14-7 18H8C4 38 1 32 1 24z" fill="url(#chrome-ring)" />
        <path d="M3 30c8 7 31 7 39 0l-4 10H7z" fill="#3a3a3a" opacity="0.65" />
        <ellipse cx="22.500" cy="22" rx="18" ry="8" fill="#4d4d4d" />
        <path d="M5.500 20l3-11C9 -2 36-2 37 9l2.500 11c-3 11-31 11-34 0z" fill="url(#redbtn)" />
        <ellipse cx="22.500" cy="9" rx="14.500" ry="8.500" fill="#e0202a" opacity="0.55" />
        <path d="M8 19c6 5 23 5 29 0" stroke="#f06a6e" strokeWidth="1" fill="none" opacity="0.6" />
        <path d="M14 35h5v5h-5zM26 35h5v5h-5z" fill="#e8e8e8" /><path d="M17 34h10v6H17z" fill="#b01218" />
        <text x="22.500" y="13" textAnchor="middle" fontSize="7" fontWeight="700" fontFamily="Open Sans, sans-serif" fill="#ffe3e3">START</text>
      </svg>
    </button>
    <button aria-label="Vue des tâches" className="ml-4 flex items-center">
      <svg width="17" height="16" viewBox="0 0 17 16" fill="none" stroke="#fff" strokeWidth="1.400" aria-hidden="true">
        <path d="M1 0v2.500h10V0M1 16v-2.500h10V16M1 4.800h10v6.200H1zM15 0v2M15 9v7" /><path d="M13.500 4h3v3h-3z" fill="#fff" stroke="none" />
      </svg>
    </button>
    <div className="ml-[22px] flex gap-[9px]">
      {apps.map((a) => (
        <button key={a.name} aria-label={a.name} className={`relative flex w-10 items-center justify-center ${a.bg ?? ""}`}>
          {a.icon}
          {a.line && <span className={`absolute inset-x-0 bottom-0 h-[2px] ${a.line}`} />}
        </button>
      ))}
    </div>
    <div className="relative ml-auto flex items-center">
      <div className="flex flex-col gap-1">
        <svg width="12" height="12" viewBox="0 0 12 12" fill="#9b938c"><path d="M4.500 0h3v5H11L6 10 1 5h3.500z" /></svg>
        <svg width="12" height="12" viewBox="0 0 12 12" fill="#9b938c"><path d="M4.500 11h3V5.500H11L6 .5 1 5.500h3.500z" /></svg>
      </div>
      <div className="ml-[33px] w-[58px] whitespace-nowrap leading-4">
        <div>1,9 Mbps</div>
        <div>1,0 kbps</div>
      </div>
      <button aria-label="Icônes cachées" className="w-[22px]">
        <svg width="12" height="8" viewBox="0 0 12 8" fill="none" stroke="#fff" strokeWidth="1.300"><path d="M.5 7L6 1.500 11.500 7" /></svg>
      </button>
      <svg width="17" height="17" viewBox="0 0 17 17" aria-hidden="true">
        <path d="M.5 2.500C3.500 2.500 6 2 8 .5c2 1.500 4.500 2 7.500 2 .2 6-2 10.500-7.500 13.500C2.500 13 .3 8.500.5 2.500z" fill="#fff" stroke="#333" />
        <path d="M8 .5V16M1 7.500h14" stroke="#333" strokeWidth="1.200" />
        <circle cx="12" cy="12" r="4.500" fill="#d9202c" /><path d="M10 10l4 4M14 10l-4 4" stroke="#fff" strokeWidth="1.300" />
      </svg>
      <svg width="12" height="16" viewBox="0 0 12 16" className="ml-[9px]" aria-hidden="true">
        <rect width="12" height="16" rx="5" fill="#0a84f0" /><path d="M3 5l6 6-3 2.500v-11L9 5l-6 6" stroke="#fff" fill="none" strokeWidth="1.200" />
      </svg>
      <svg width="14" height="17" viewBox="0 0 14 17" className="ml-3" fill="none" stroke="#fff" aria-hidden="true">
        <path d="M3 5.500V1h6v4.500M1.500 5.500h9v6q0 4-4 4.500h-2q-3-.5-3-3zM5 3h.8M7 3h.8" /><path d="M8 13l2 2 3.500-3.500" strokeWidth="1.300" opacity="0.6" />
      </svg>
      <svg width="16" height="15" viewBox="0 0 16 15" className="ml-2" fill="none" stroke="#fff" aria-hidden="true">
        <path d="M5 3.500h10.500v7h-11V8M9 10.500V14M5 14h8M.5 1.500h4v3h-4zM2.500 4.500v6h2" />
      </svg>
      <svg width="17" height="14" viewBox="0 0 17 14" className="ml-2" fill="none" stroke="#fff" aria-hidden="true">
        <path d="M1 5h2.500L7 1.500v11L3.500 9H1zM9 4.500q1.800 2.500 0 5M11.300 3q3 4 0 8" /><path d="M13.600 1.500q4.400 5.500 0 11" opacity="0.5" />
      </svg>
      <div className="ml-2 w-[62px] whitespace-nowrap text-center leading-[18px]">
        <div>18:09</div>
        <div>02/03/2023</div>
      </div>
      <button aria-label="Notifications" className="relative ml-4 mr-[11px]">
        <svg width="25" height="26" viewBox="0 0 25 26" aria-hidden="true">
          <path d="M0 3h16v12H8l-3.500 3.500V15H0z" fill="#fff" />
          <path d="M2.500 6.500h11M2.500 9.300h11M2.500 12h7" stroke="#6b2a0c" strokeWidth="1.200" />
          <circle cx="15.500" cy="17.500" r="8" fill="#3a3a3a" stroke="#777" />
          <text x="15.500" y="21.500" textAnchor="middle" fontSize="11" fontFamily="Open Sans, sans-serif" fill="#fff">1</text>
        </svg>
      </button>
      <div className="mr-1 h-10 w-px bg-[#9c8272]" />
    </div>
  </footer>
);

export default function App() {
  return (
    <div className="flex h-screen flex-col overflow-hidden bg-[#f0f0f0] font-['Open_Sans','Noto_Sans',sans-serif] text-[11px] leading-4 text-black">
      <Defs />
      <TitleBar />
      <MenuBar />
      <ToolBar />
      <main className="flex min-h-0 flex-1 gap-[3px] border-t border-[#a0a0a0]">
        <Tree />
        <LeftPane />
        <RightPane />
      </main>
      <Taskbar />
    </div>
  );
}
